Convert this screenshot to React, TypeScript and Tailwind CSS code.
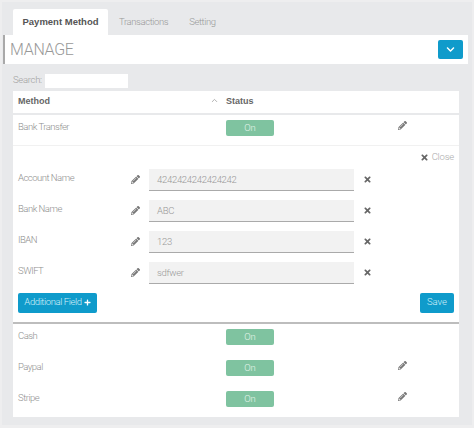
import { FaChevronDown, FaPencilAlt, FaPlus, FaTimes } from 'react-icons/fa'
import { ChevronUp } from 'lucide-react'

const fields = [
  { label: 'Account Name', value: '4242424242424242' },
  { label: 'Bank Name', value: 'ABC' },
  { label: 'IBAN', value: '123' },
  { label: 'SWIFT', value: 'sdfwer' },
]

const methods = [
  { name: 'Cash', edit: false },
  { name: 'Paypal', edit: true },
  { name: 'Stripe', edit: true },
]

function Toggle() {
  return (
    <div className="w-[48px] h-[16px] rounded-[2px] bg-[#7fc3a0] text-[#e4f4ea] text-[9.5px] leading-[16px] text-center shrink-0">
      On
    </div>
  )
}

function MethodRow({ name, edit }: { name: string; edit: boolean }) {
  return (
    <div className="h-[31px] flex pl-[5px]">
      <div className="w-[208px] text-[9.5px] tracking-[-0.5px] leading-[13px] text-[#8f8f8f]">{name}</div>
      <Toggle />
      {edit && <FaPencilAlt className="ml-[124px] mt-[1px] size-[9px] text-[#777]" />}
    </div>
  )
}

export default function App() {
  return (
    <div className="w-[474px] h-[428px] bg-[#e8e9eb] border-t-2 border-l-2 border-r-2 border-b-[3px] border-[#eeeeef] font-['Roboto',sans-serif] font-light overflow-hidden pt-[7px]">
      <div className="flex h-[26px] ml-[11px] text-[9.5px] tracking-[-0.4px]">
        <div className="w-[95px] bg-white rounded-t-[2px] font-['Liberation_Sans',sans-serif] font-bold tracking-normal text-[#555] text-center leading-[26px]">
          Payment Method
        </div>
        <div className="ml-[11px] leading-[26px] text-[#999]">Transactions</div>
        <div className="ml-[21px] leading-[26px] text-[#999]">Setting</div>
      </div>

      <div className="ml-[1px] w-[465px] h-[29px] bg-white border-l-2 border-[#a9a9a9] flex items-center justify-between pl-[5px] pr-[5px]">
        <span className="text-[16px] text-[#999] tracking-[-0.3px]">MANAGE</span>
        <button className="w-[25px] h-[19px] rounded-[2px] bg-[#0f9bcb] text-white flex items-center justify-center">
          <FaChevronDown className="size-[9px]" />
        </button>
      </div>

      <div className="flex items-center h-[15px] mt-[9px] ml-[11px]">
        <span className="w-[32px] text-[9.5px] tracking-[-0.3px] text-[#a0a0a0]">Search:</span>
        <div className="w-[83px] h-[14px] bg-white" />
      </div>

      <div className="mt-[3px] ml-[11px] w-[446px] h-[326px] bg-white">
        <div className="h-[22px] flex items-center pl-[5px] font-['Liberation_Sans',sans-serif] text-[9px] font-bold text-[#666]">
          <span className="w-[192px]">Method</span>
          <ChevronUp className="size-[9px] text-[#999] mb-[3px]" strokeWidth={2} />
          <span className="ml-[7px]">Status</span>
        </div>
        <div className="h-[2px] bg-[#e8e9eb]" />

        <div className="h-[31px] flex pl-[5px] pt-[5px] border-b border-[#f1f1f1]">
          <div className="w-[208px] text-[9.5px] tracking-[-0.5px] leading-[13px] text-[#8f8f8f]">Bank Transfer</div>
          <Toggle />
          <FaPencilAlt className="ml-[124px] mt-[1px] size-[9px] text-[#777]" />
        </div>

        <div className="h-[176px] pl-[5px] pr-[5px] flex flex-col">
          <div className="h-[23px] flex items-center justify-end gap-[3px] text-[9.5px] tracking-[-0.2px] text-[#aaa]">
            <FaTimes className="size-[9px] text-[#666]" />
            Close
          </div>
          {fields.map((f) => (
            <div key={f.label} className="h-[31px] flex shrink-0">
              <div className="w-[113px] pt-[2px] text-[9.5px] tracking-[-0.5px] leading-[13px] text-[#8f8f8f]">{f.label}</div>
              <FaPencilAlt className="mt-[6px] size-[9px] text-[#777]" />
              <div className="ml-[9px] w-[205px] h-[22px] bg-[#f2f2f2] border-b border-[#aaa] pl-[8px] text-[9.5px] tracking-[-0.3px] leading-[22px] text-[#999]">
                {f.value}
              </div>
              <FaTimes className="ml-[9px] mt-[6px] size-[9px] text-[#666]" />
            </div>
          ))}
          <div className="flex justify-between items-center mt-[-1px] h-[21px]">
            <button className="w-[79px] h-[20px] rounded-[2px] bg-[#0f9bcb] text-[#d5f0f9] text-[9.5px] tracking-[-0.4px] flex items-center justify-center gap-[2px] whitespace-nowrap">
              Additional Field
              <FaPlus className="size-[7px] text-white" />
            </button>
            <button className="w-[34px] h-[20px] rounded-[2px] bg-[#0f9bcb] text-[#d5f0f9] text-[9.5px]">
              Save
            </button>
          </div>
        </div>

        <div className="h-[2px] bg-[#bdbdbd] mb-[5px]" />
        {methods.map((m) => (
          <MethodRow key={m.name} name={m.name} edit={m.edit} />
        ))}
      </div>
    </div>
  )
}
